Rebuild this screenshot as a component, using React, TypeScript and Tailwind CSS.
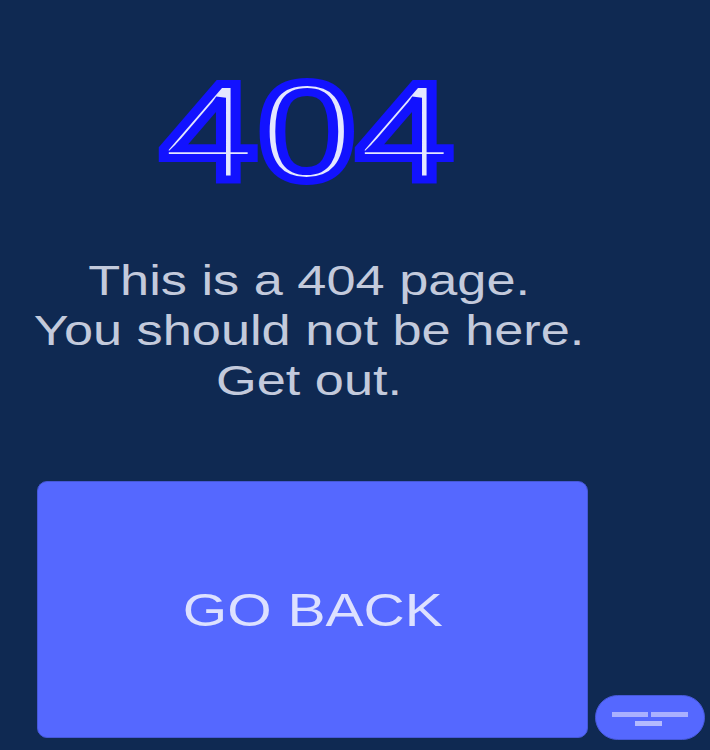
import React from "react";

export default function App() {
  return (
    <div className="relative min-h-[750px] w-full overflow-hidden bg-[#0f2952] font-['Liberation_Sans',Arial,sans-serif]">
      <div className="flex w-[551px] ml-[37px] flex-col items-center pt-[62px]">
        <h1 className="mr-[12px] inline-block scale-x-[1.26] text-[140px] leading-[140px] font-normal text-[#e4e7ff] [-webkit-text-stroke:8px_#1212ff]">
          404
        </h1>
        <p className="mr-[6px] mt-[54px] inline-block scale-x-[1.245] text-center text-[42px] leading-[50px] text-[#c3cadc]">
          This is a 404 page.
          <br />
          You should not be here.
          <br />
          Get out.
        </p>
        <button className="mt-[75px] flex h-[257px] w-[551px] items-center justify-center rounded-[10px] border border-[#4658d8] bg-[#5568ff]">
          <span className="inline-block scale-x-[1.24] text-[46px] leading-none text-[#dde1ff]">
            GO BACK
          </span>
        </button>
      </div>
      <div className="absolute left-[595px] top-[695px] flex h-[45px] w-[110px] items-center justify-center rounded-full border border-[#4658d8] bg-[#5568ff]">
        <svg width="80" height="20" viewBox="0 0 80 20">
          <rect x="2" y="4" width="36" height="5" fill="#aab0ff" />
          <rect x="41" y="4" width="37" height="5" fill="#aab0ff" />
          <rect x="25" y="13" width="27" height="5" fill="#b4baff" />
        </svg>
      </div>
    </div>
  );
}
